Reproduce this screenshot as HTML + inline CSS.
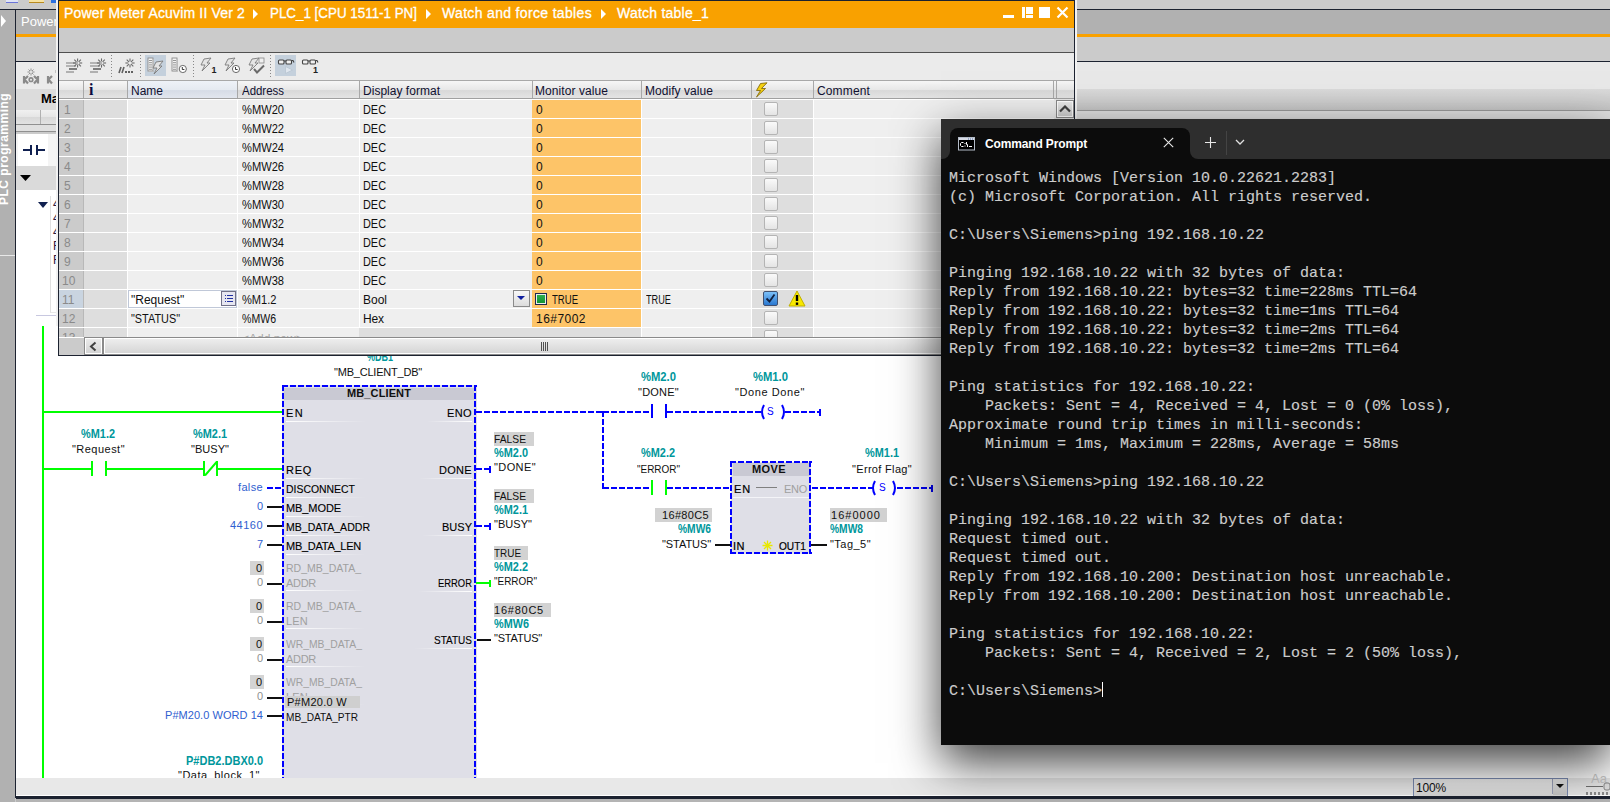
<!DOCTYPE html>
<html><head><meta charset="utf-8">
<style>
*{margin:0;padding:0;box-sizing:border-box}
html,body{width:1610px;height:802px;overflow:hidden;background:#cbcbcb;font-family:"Liberation Sans",sans-serif;position:relative}
.a{position:absolute}
.t{position:absolute;white-space:pre;line-height:1}
</style></head><body>
<div class="a" style="left:0px;top:0px;width:1610px;height:802px;background:#cbcbcb;"></div>
<div class="a" style="left:0px;top:10px;width:15px;height:792px;background:#b1b1b1;"></div>
<div class="a" style="left:0px;top:9px;width:1610px;height:1px;background:#1c2230;"></div>
<div class="a" style="left:15px;top:10px;width:1px;height:788px;background:#1c2230;"></div>
<div class="a" style="left:6px;top:0px;width:12px;height:3px;background:#dfe3f5;border-bottom:1px solid #6a74d8"></div>
<div class="a" style="left:29px;top:0px;width:15px;height:3px;background:#f6e2a0;border-bottom:1px solid #b88a20"></div>
<div class="a" style="left:51px;top:0px;width:5px;height:3px;background:#2a6fe0;"></div>
<svg class="a" style="left:0;top:14px" width="8" height="14"><path d="M1 1 L6 7 L1 13 Z" fill="#fff"/></svg>
<div class="t" style="left:-2px;top:205px;font-size:12px;color:#fff;font-weight:700;transform:rotate(-90deg);transform-origin:0 0;letter-spacing:0.5px">PLC programming</div>
<div class="a" style="left:0px;top:255px;width:15px;height:1px;background:#e8e8e8;"></div>
<div class="a" style="left:16px;top:10px;width:40px;height:24px;background:#b1b1b1;"></div>
<div class="t" style="left:21px;top:15px;font-size:13px;color:#fff;font-weight:400;font-family:'Liberation Sans',sans-serif;">Power</div>
<div class="a" style="left:16px;top:34px;width:40px;height:3px;background:#f9a100;"></div>
<div class="a" style="left:16px;top:37px;width:40px;height:24px;background:#cbcbcb;"></div>
<div class="a" style="left:16px;top:61px;width:40px;height:1px;background:#1c2230;"></div>
<div class="a" style="left:16px;top:62px;width:40px;height:27px;background:#ebebeb;"></div>
<svg class="a" style="left:16px;top:62px" width="42" height="27"><g transform="translate(-16,-62)"><path d="M24 76v7.5M24.5 79.5l3.5-3.5M24.5 79.5l3.5 4M38 76v7.5M37.5 79.5l-3.5-3.5M37.5 79.5l-3.5 4" stroke="#8a8a8a" stroke-width="2.2" fill="none"/><circle cx="31" cy="79.7" r="1.8" fill="none" stroke="#8a8a8a" stroke-width="1.6"/><path d="M31 68.5v2.5M31 73v2.5M27.5 72h2.5M32 72h2.5M28.5 69.5l1.6 1.6M33.5 69.5l-1.6 1.6M28.5 74.5l1.6-1.6M33.5 74.5l-1.6-1.6" stroke="#888" stroke-width="0.9"/><path d="M48 76v7.5M48.5 79.5l3.5-3.5M48.5 79.5l3.5 4" stroke="#8a8a8a" stroke-width="2.2" fill="none"/><path d="M56 70v3" stroke="#999" stroke-width="1"/></g></svg>
<div class="a" style="left:16px;top:89px;width:40px;height:21px;background:#dcdcdc;"></div>
<div class="t" style="left:41px;top:92px;font-size:13px;color:#000;font-weight:700;font-family:'Liberation Sans',sans-serif;">Ma</div>
<div class="a" style="left:16px;top:110px;width:40px;height:15px;background:#e4e4e4;border-bottom:1px solid #909090;background:linear-gradient(#f0f0f0,#e6e6e6 50%,#d8d8d8 51%,#e2e2e2)"></div>
<div class="a" style="left:40px;top:110px;width:1px;height:14px;background:#b0b0b0;"></div>
<div class="a" style="left:16px;top:125px;width:40px;height:7px;background:#e0e0e0;border-bottom:1px solid #909090"></div>
<div class="a" style="left:16px;top:134px;width:40px;height:32px;background:#f4f4f4;"></div>
<div class="a" style="left:18px;top:134px;width:30px;height:32px;background:#fff;"></div>
<svg class="a" style="left:22px;top:143px" width="24" height="14"><path d="M1 7H9M9 2V12M15 2V12M15 7H23" stroke="#102050" stroke-width="2" fill="none"/></svg>
<div class="a" style="left:16px;top:166px;width:40px;height:24px;background:#dadada;"></div>
<svg class="a" style="left:20px;top:175px" width="12" height="7"><path d="M0 0H11L5.5 6Z" fill="#000"/></svg>
<div class="a" style="left:16px;top:190px;width:40px;height:136px;background:#fff;"></div>
<svg class="a" style="left:38px;top:202px" width="11" height="7"><path d="M0 0H10L5 6Z" fill="#102050"/></svg>
<div class="a" style="left:50px;top:196px;width:6px;height:117px;background:#ffffff;border-left:1px solid #e0e0e0;border-bottom:1px solid #e8e8e8"></div>
<div class="t" style="left:53px;top:198px;font-size:12px;color:#302040;font-weight:400;font-family:'Liberation Sans',sans-serif;">4</div>
<div class="t" style="left:53px;top:212px;font-size:12px;color:#302040;font-weight:400;font-family:'Liberation Sans',sans-serif;">4</div>
<div class="t" style="left:53px;top:226px;font-size:12px;color:#302040;font-weight:400;font-family:'Liberation Sans',sans-serif;">4</div>
<div class="t" style="left:53px;top:240px;font-size:12px;color:#302040;font-weight:400;font-family:'Liberation Sans',sans-serif;">F</div>
<div class="t" style="left:53px;top:254px;font-size:12px;color:#302040;font-weight:400;font-family:'Liberation Sans',sans-serif;">F</div>
<div class="a" style="left:36px;top:315px;width:20px;height:1px;background:#c8c8e0;"></div>
<div class="a" style="left:56px;top:0px;width:2px;height:356px;background:#f2f2f2;"></div>
<div class="a" style="left:1077px;top:10px;width:533px;height:24px;background:#b1b1b1;"></div>
<div class="a" style="left:1077px;top:34px;width:533px;height:3px;background:#f9a100;"></div>
<div class="a" style="left:1077px;top:37px;width:533px;height:24px;background:#cbcbcb;"></div>
<div class="a" style="left:1077px;top:61px;width:533px;height:1px;background:#1c2230;"></div>
<div class="a" style="left:1077px;top:62px;width:533px;height:27px;background:#e8e8e8;"></div>
<div class="a" style="left:1077px;top:89px;width:533px;height:21px;background:#d0d0d0;background:linear-gradient(#dadada,#c6c6c6)"></div>
<div class="a" style="left:1077px;top:110px;width:533px;height:1px;background:#9a9a9a;"></div>
<div class="a" style="left:1075px;top:111px;width:535px;height:8px;background:#e2e2e2;"></div>
<div class="a" style="left:1075px;top:0px;width:2px;height:356px;background:#f2f2f2;"></div>
<div class="a" style="left:16px;top:326px;width:1594px;height:452px;background:#ffffff;"></div>
<div class="a" style="left:42px;top:326px;width:2px;height:452px;background:#00ff00;"></div>
<div class="a" style="left:44px;top:411px;width:238px;height:2px;background:#00ff00;"></div>
<div class="a" style="left:44px;top:468px;width:47px;height:2px;background:#00ff00;"></div>
<div class="a" style="left:91px;top:461px;width:2px;height:15px;background:#00ff00;"></div>
<div class="a" style="left:105px;top:461px;width:2px;height:15px;background:#00ff00;"></div>
<div class="a" style="left:107px;top:468px;width:96px;height:2px;background:#00ff00;"></div>
<div class="a" style="left:203px;top:461px;width:2px;height:15px;background:#00ff00;"></div>
<div class="a" style="left:216px;top:461px;width:2px;height:15px;background:#00ff00;"></div>
<svg class="a" style="left:203px;top:461px" width="16" height="15"><path d="M2 14.5L14 0.5" stroke="#00ff00" stroke-width="2"/></svg>
<div class="a" style="left:218px;top:468px;width:64px;height:2px;background:#00ff00;"></div>
<div class="t" style="left:81px;top:428px;font-size:12px;color:#00979c;font-weight:700;font-family:'Liberation Sans',sans-serif;transform:scaleX(0.9101);transform-origin:0 0;">%M1.2</div>
<div class="t" style="left:72px;top:444px;font-size:11px;color:#101010;font-weight:400;font-family:'Liberation Sans',sans-serif;letter-spacing:0.469px;">&quot;Request&quot;</div>
<div class="t" style="left:193px;top:428px;font-size:12px;color:#00979c;font-weight:700;font-family:'Liberation Sans',sans-serif;transform:scaleX(0.9101);transform-origin:0 0;">%M2.1</div>
<div class="t" style="left:191px;top:444px;font-size:11px;color:#101010;font-weight:400;font-family:'Liberation Sans',sans-serif;letter-spacing:0.039px;">&quot;BUSY&quot;</div>
<div class="a" style="left:282px;top:385px;width:195px;height:393px;background:#dfdfe7"></div>
<div class="a" style="left:284px;top:388px;width:190px;height:12px;background:#c9c9d3;"></div>
<div class="a" style="left:282px;top:385px;width:195px;height:2px;background:repeating-linear-gradient(90deg,#0000ff 0px,#0000ff 6px,transparent 6px,transparent 8px)"></div>
<div class="a" style="left:282px;top:385px;width:2px;height:393px;background:repeating-linear-gradient(180deg,#0000ff 0px,#0000ff 6px,transparent 6px,transparent 8px)"></div>
<div class="a" style="left:474px;top:385px;width:2px;height:393px;background:repeating-linear-gradient(180deg,#0000ff 0px,#0000ff 6px,transparent 6px,transparent 8px)"></div>
<div class="t" style="left:367px;top:351px;font-size:12px;color:#00979c;font-weight:700;font-family:'Liberation Sans',sans-serif;transform:scaleX(0.7495);transform-origin:0 0;">%DB1</div>
<div class="t" style="left:334px;top:367px;font-size:11px;color:#101010;font-weight:400;font-family:'Liberation Sans',sans-serif;letter-spacing:-0.211px;">&quot;MB_CLIENT_DB&quot;</div>
<div class="t" style="left:347px;top:388px;font-size:11px;color:#101010;font-weight:700;font-family:'Liberation Sans',sans-serif;letter-spacing:0.116px;">MB_CLIENT</div>
<div class="t" style="left:286px;top:408px;font-size:11px;color:#000;font-weight:400;font-family:'Liberation Sans',sans-serif;letter-spacing:1.359px;-webkit-text-stroke:0.12px #000">EN</div>
<div class="a" style="left:286px;top:421px;width:80px;height:1px;background:linear-gradient(90deg,#fff,rgba(255,255,255,0))"></div>
<div class="t" style="left:286px;top:465px;font-size:11px;color:#000;font-weight:400;font-family:'Liberation Sans',sans-serif;letter-spacing:0.719px;-webkit-text-stroke:0.12px #000">REQ</div>
<div class="a" style="left:286px;top:478px;width:80px;height:1px;background:linear-gradient(90deg,#fff,rgba(255,255,255,0))"></div>
<div class="t" style="left:286px;top:484px;font-size:11px;color:#000;font-weight:400;font-family:'Liberation Sans',sans-serif;transform:scaleX(0.9487);transform-origin:0 0;-webkit-text-stroke:0.12px #000">DISCONNECT</div>
<div class="a" style="left:286px;top:497px;width:80px;height:1px;background:linear-gradient(90deg,#fff,rgba(255,255,255,0))"></div>
<div class="t" style="left:286px;top:503px;font-size:11px;color:#000;font-weight:400;font-family:'Liberation Sans',sans-serif;letter-spacing:-0.089px;-webkit-text-stroke:0.12px #000">MB_MODE</div>
<div class="a" style="left:286px;top:516px;width:80px;height:1px;background:linear-gradient(90deg,#fff,rgba(255,255,255,0))"></div>
<div class="t" style="left:286px;top:522px;font-size:11px;color:#000;font-weight:400;font-family:'Liberation Sans',sans-serif;transform:scaleX(0.9588);transform-origin:0 0;-webkit-text-stroke:0.12px #000">MB_DATA_ADDR</div>
<div class="a" style="left:286px;top:535px;width:80px;height:1px;background:linear-gradient(90deg,#fff,rgba(255,255,255,0))"></div>
<div class="t" style="left:286px;top:541px;font-size:11px;color:#000;font-weight:400;font-family:'Liberation Sans',sans-serif;letter-spacing:-0.259px;-webkit-text-stroke:0.12px #000">MB_DATA_LEN</div>
<div class="a" style="left:286px;top:554px;width:80px;height:1px;background:linear-gradient(90deg,#fff,rgba(255,255,255,0))"></div>
<div class="t" style="left:447px;top:408px;font-size:11px;color:#000;font-weight:400;font-family:'Liberation Sans',sans-serif;letter-spacing:0.385px;-webkit-text-stroke:0.12px #000">ENO</div>
<div class="a" style="left:427px;top:421px;width:45px;height:1px;background:linear-gradient(270deg,#fff,rgba(255,255,255,0))"></div>
<div class="t" style="left:439px;top:465px;font-size:11px;color:#000;font-weight:400;font-family:'Liberation Sans',sans-serif;letter-spacing:0.305px;-webkit-text-stroke:0.12px #000">DONE</div>
<div class="a" style="left:419px;top:478px;width:53px;height:1px;background:linear-gradient(270deg,#fff,rgba(255,255,255,0))"></div>
<div class="t" style="left:442px;top:522px;font-size:11px;color:#000;font-weight:400;font-family:'Liberation Sans',sans-serif;letter-spacing:0.008px;-webkit-text-stroke:0.12px #000">BUSY</div>
<div class="a" style="left:422px;top:535px;width:50px;height:1px;background:linear-gradient(270deg,#fff,rgba(255,255,255,0))"></div>
<div class="t" style="left:438px;top:578px;font-size:11px;color:#000;font-weight:400;font-family:'Liberation Sans',sans-serif;transform:scaleX(0.8557);transform-origin:0 0;-webkit-text-stroke:0.12px #000">ERROR</div>
<div class="a" style="left:418px;top:591px;width:54px;height:1px;background:linear-gradient(270deg,#fff,rgba(255,255,255,0))"></div>
<div class="t" style="left:434px;top:635px;font-size:11px;color:#000;font-weight:400;font-family:'Liberation Sans',sans-serif;transform:scaleX(0.9098);transform-origin:0 0;-webkit-text-stroke:0.12px #000">STATUS</div>
<div class="a" style="left:414px;top:648px;width:58px;height:1px;background:linear-gradient(270deg,#fff,rgba(255,255,255,0))"></div>
<div class="t" style="left:286px;top:563px;font-size:11px;color:#a0a0a0;font-weight:400;font-family:'Liberation Sans',sans-serif;transform:scaleX(0.9560);transform-origin:0 0;">RD_MB_DATA_</div>
<div class="t" style="left:286px;top:578px;font-size:11px;color:#a0a0a0;font-weight:400;font-family:'Liberation Sans',sans-serif;letter-spacing:-0.293px;">ADDR</div>
<div class="a" style="left:286px;top:590px;width:80px;height:1px;background:linear-gradient(90deg,#fff,rgba(255,255,255,0))"></div>
<div class="a" style="left:250px;top:561px;width:14px;height:14px;background:#d4d4d4;"></div>
<div class="t" style="left:256px;top:563px;font-size:11px;color:#101010;font-weight:400;font-family:'Liberation Sans',sans-serif;">0</div>
<div class="t" style="left:257px;top:577px;font-size:11px;color:#909090;font-weight:400;font-family:'Liberation Sans',sans-serif;">0</div>
<div class="a" style="left:267px;top:583px;width:15px;height:2px;background:#101010;"></div>
<div class="t" style="left:286px;top:601px;font-size:11px;color:#a0a0a0;font-weight:400;font-family:'Liberation Sans',sans-serif;transform:scaleX(0.9560);transform-origin:0 0;">RD_MB_DATA_</div>
<div class="t" style="left:286px;top:616px;font-size:11px;color:#a0a0a0;font-weight:400;font-family:'Liberation Sans',sans-serif;letter-spacing:0.198px;">LEN</div>
<div class="a" style="left:286px;top:628px;width:80px;height:1px;background:linear-gradient(90deg,#fff,rgba(255,255,255,0))"></div>
<div class="a" style="left:250px;top:599px;width:14px;height:14px;background:#d4d4d4;"></div>
<div class="t" style="left:256px;top:601px;font-size:11px;color:#101010;font-weight:400;font-family:'Liberation Sans',sans-serif;">0</div>
<div class="t" style="left:257px;top:615px;font-size:11px;color:#909090;font-weight:400;font-family:'Liberation Sans',sans-serif;">0</div>
<div class="a" style="left:267px;top:621px;width:15px;height:2px;background:#101010;"></div>
<div class="t" style="left:286px;top:639px;font-size:11px;color:#a0a0a0;font-weight:400;font-family:'Liberation Sans',sans-serif;transform:scaleX(0.9395);transform-origin:0 0;">WR_MB_DATA_</div>
<div class="t" style="left:286px;top:654px;font-size:11px;color:#a0a0a0;font-weight:400;font-family:'Liberation Sans',sans-serif;letter-spacing:-0.293px;">ADDR</div>
<div class="a" style="left:286px;top:666px;width:80px;height:1px;background:linear-gradient(90deg,#fff,rgba(255,255,255,0))"></div>
<div class="a" style="left:250px;top:637px;width:14px;height:14px;background:#d4d4d4;"></div>
<div class="t" style="left:256px;top:639px;font-size:11px;color:#101010;font-weight:400;font-family:'Liberation Sans',sans-serif;">0</div>
<div class="t" style="left:257px;top:653px;font-size:11px;color:#909090;font-weight:400;font-family:'Liberation Sans',sans-serif;">0</div>
<div class="a" style="left:267px;top:659px;width:15px;height:2px;background:#101010;"></div>
<div class="t" style="left:286px;top:677px;font-size:11px;color:#a0a0a0;font-weight:400;font-family:'Liberation Sans',sans-serif;transform:scaleX(0.9395);transform-origin:0 0;">WR_MB_DATA_</div>
<div class="t" style="left:286px;top:692px;font-size:11px;color:#a0a0a0;font-weight:400;font-family:'Liberation Sans',sans-serif;letter-spacing:0.198px;">LEN</div>
<div class="a" style="left:286px;top:704px;width:80px;height:1px;background:linear-gradient(90deg,#fff,rgba(255,255,255,0))"></div>
<div class="a" style="left:250px;top:675px;width:14px;height:14px;background:#d4d4d4;"></div>
<div class="t" style="left:256px;top:677px;font-size:11px;color:#101010;font-weight:400;font-family:'Liberation Sans',sans-serif;">0</div>
<div class="t" style="left:257px;top:691px;font-size:11px;color:#909090;font-weight:400;font-family:'Liberation Sans',sans-serif;">0</div>
<div class="a" style="left:267px;top:697px;width:15px;height:2px;background:#101010;"></div>
<div class="a" style="left:285px;top:696px;width:75px;height:12px;background:#cfcfcf;"></div>
<div class="t" style="left:287px;top:697px;font-size:11px;color:#101010;font-weight:400;font-family:'Liberation Sans',sans-serif;letter-spacing:0.281px;">P#M20.0 W</div>
<div class="t" style="left:286px;top:712px;font-size:11px;color:#101010;font-weight:400;font-family:'Liberation Sans',sans-serif;transform:scaleX(0.9177);transform-origin:0 0;">MB_DATA_PTR</div>
<div class="t" style="left:165px;top:710px;font-size:11px;color:#3060d0;font-weight:400;font-family:'Liberation Sans',sans-serif;letter-spacing:0.053px;">P#M20.0 WORD 14</div>
<div class="a" style="left:267px;top:715px;width:15px;height:2px;background:#101010;"></div>
<div class="t" style="left:186px;top:755px;font-size:12px;color:#00979c;font-weight:700;font-family:'Liberation Sans',sans-serif;transform:scaleX(0.9162);transform-origin:0 0;">P#DB2.DBX0.0</div>
<div class="t" style="left:178px;top:770px;font-size:11px;color:#101010;font-weight:400;font-family:'Liberation Sans',sans-serif;letter-spacing:0.494px;">&quot;Data_block_1&quot;</div>
<div class="t" style="left:238px;top:482px;font-size:11px;color:#3060d0;font-weight:400;font-family:'Liberation Sans',sans-serif;letter-spacing:0.350px;">false</div>
<div class="a" style="left:267px;top:487px;width:15px;height:2px;background:repeating-linear-gradient(90deg,#0000ff 0px,#0000ff 6px,transparent 6px,transparent 8px)"></div>
<div class="t" style="left:257px;top:501px;font-size:11px;color:#3060d0;font-weight:400;font-family:'Liberation Sans',sans-serif;">0</div>
<div class="a" style="left:267px;top:506px;width:15px;height:2px;background:#101010;"></div>
<div class="t" style="left:230px;top:520px;font-size:11px;color:#3060d0;font-weight:400;font-family:'Liberation Sans',sans-serif;letter-spacing:0.481px;">44160</div>
<div class="a" style="left:267px;top:525px;width:15px;height:2px;background:#101010;"></div>
<div class="t" style="left:257px;top:539px;font-size:11px;color:#3060d0;font-weight:400;font-family:'Liberation Sans',sans-serif;">7</div>
<div class="a" style="left:267px;top:544px;width:15px;height:2px;background:#101010;"></div>
<div class="a" style="left:476px;top:411px;width:127px;height:2px;background:repeating-linear-gradient(90deg,#0000ff 0px,#0000ff 6px,transparent 6px,transparent 8px)"></div>
<div class="a" style="left:476px;top:468px;width:14px;height:2px;background:repeating-linear-gradient(90deg,#0000ff 0px,#0000ff 6px,transparent 6px,transparent 8px)"></div>
<div class="a" style="left:489px;top:466px;width:2px;height:7px;background:#0000ff;"></div>
<div class="a" style="left:476px;top:525px;width:14px;height:2px;background:repeating-linear-gradient(90deg,#0000ff 0px,#0000ff 6px,transparent 6px,transparent 8px)"></div>
<div class="a" style="left:489px;top:523px;width:2px;height:7px;background:#0000ff;"></div>
<div class="a" style="left:476px;top:582px;width:15px;height:2px;background:#00ff00;"></div>
<div class="a" style="left:489px;top:580px;width:2px;height:7px;background:#00ff00;"></div>
<div class="a" style="left:477px;top:639px;width:14px;height:2px;background:#101010;"></div>
<div class="a" style="left:494px;top:432px;width:40px;height:14px;background:#d2d2d2;"></div>
<div class="t" style="left:494px;top:434px;font-size:11px;color:#101010;font-weight:400;font-family:'Liberation Sans',sans-serif;transform:scaleX(0.9343);transform-origin:0 0;">FALSE</div>
<div class="t" style="left:494px;top:447px;font-size:12px;color:#00979c;font-weight:700;font-family:'Liberation Sans',sans-serif;transform:scaleX(0.9101);transform-origin:0 0;">%M2.0</div>
<div class="t" style="left:494px;top:462px;font-size:11px;color:#101010;font-weight:400;font-family:'Liberation Sans',sans-serif;letter-spacing:0.401px;">&quot;DONE&quot;</div>
<div class="a" style="left:494px;top:489px;width:40px;height:14px;background:#d2d2d2;"></div>
<div class="t" style="left:494px;top:491px;font-size:11px;color:#101010;font-weight:400;font-family:'Liberation Sans',sans-serif;transform:scaleX(0.9343);transform-origin:0 0;">FALSE</div>
<div class="t" style="left:494px;top:504px;font-size:12px;color:#00979c;font-weight:700;font-family:'Liberation Sans',sans-serif;transform:scaleX(0.9101);transform-origin:0 0;">%M2.1</div>
<div class="t" style="left:494px;top:519px;font-size:11px;color:#101010;font-weight:400;font-family:'Liberation Sans',sans-serif;letter-spacing:0.039px;">&quot;BUSY&quot;</div>
<div class="a" style="left:494px;top:546px;width:34px;height:14px;background:#d2d2d2;"></div>
<div class="t" style="left:494px;top:548px;font-size:11px;color:#101010;font-weight:400;font-family:'Liberation Sans',sans-serif;transform:scaleX(0.9014);transform-origin:0 0;">TRUE</div>
<div class="t" style="left:494px;top:561px;font-size:12px;color:#00979c;font-weight:700;font-family:'Liberation Sans',sans-serif;transform:scaleX(0.9101);transform-origin:0 0;">%M2.2</div>
<div class="t" style="left:494px;top:576px;font-size:11px;color:#101010;font-weight:400;font-family:'Liberation Sans',sans-serif;transform:scaleX(0.9044);transform-origin:0 0;">&quot;ERROR&quot;</div>
<div class="a" style="left:494px;top:603px;width:57px;height:14px;background:#d2d2d2;"></div>
<div class="t" style="left:494px;top:605px;font-size:11px;color:#101010;font-weight:400;font-family:'Liberation Sans',sans-serif;letter-spacing:0.763px;">16#80C5</div>
<div class="t" style="left:494px;top:618px;font-size:12px;color:#00979c;font-weight:700;font-family:'Liberation Sans',sans-serif;transform:scaleX(0.9051);transform-origin:0 0;">%MW6</div>
<div class="t" style="left:494px;top:633px;font-size:11px;color:#101010;font-weight:400;font-family:'Liberation Sans',sans-serif;letter-spacing:-0.197px;">&quot;STATUS&quot;</div>
<div class="a" style="left:602px;top:411px;width:2px;height:78px;background:repeating-linear-gradient(180deg,#0000ff 0px,#0000ff 6px,transparent 6px,transparent 8px)"></div>
<div class="a" style="left:603px;top:411px;width:49px;height:2px;background:repeating-linear-gradient(90deg,#0000ff 0px,#0000ff 6px,transparent 6px,transparent 8px)"></div>
<div class="a" style="left:651px;top:404px;width:2px;height:14px;background:#0000ff;"></div>
<div class="a" style="left:665px;top:404px;width:2px;height:14px;background:#0000ff;"></div>
<div class="a" style="left:667px;top:411px;width:94px;height:2px;background:repeating-linear-gradient(90deg,#0000ff 0px,#0000ff 6px,transparent 6px,transparent 8px)"></div>
<svg class="a" style="left:759px;top:404px" width="28" height="16"><path d="M5 1Q1 8 5 15M23 1Q27 8 23 15" stroke="#0000ff" stroke-width="2" fill="none"/></svg>
<div class="t" style="left:767px;top:407px;font-size:10px;color:#0000ff;font-weight:400;font-family:'Liberation Sans',sans-serif;letter-spacing:0.328px;">S</div>
<div class="a" style="left:785px;top:411px;width:36px;height:2px;background:repeating-linear-gradient(90deg,#0000ff 0px,#0000ff 6px,transparent 6px,transparent 8px)"></div>
<div class="a" style="left:819px;top:409px;width:2px;height:7px;background:#0000ff;"></div>
<div class="t" style="left:641px;top:371px;font-size:12px;color:#00979c;font-weight:700;font-family:'Liberation Sans',sans-serif;transform:scaleX(0.9368);transform-origin:0 0;">%M2.0</div>
<div class="t" style="left:638px;top:387px;font-size:11px;color:#101010;font-weight:400;font-family:'Liberation Sans',sans-serif;letter-spacing:0.234px;">&quot;DONE&quot;</div>
<div class="t" style="left:753px;top:371px;font-size:12px;color:#00979c;font-weight:700;font-family:'Liberation Sans',sans-serif;transform:scaleX(0.9368);transform-origin:0 0;">%M1.0</div>
<div class="t" style="left:735px;top:387px;font-size:11px;color:#101010;font-weight:400;font-family:'Liberation Sans',sans-serif;letter-spacing:0.594px;">&quot;Done Done&quot;</div>
<div class="a" style="left:603px;top:487px;width:49px;height:2px;background:repeating-linear-gradient(90deg,#0000ff 0px,#0000ff 6px,transparent 6px,transparent 8px)"></div>
<div class="a" style="left:651px;top:480px;width:2px;height:15px;background:#00ff00;"></div>
<div class="a" style="left:665px;top:480px;width:2px;height:15px;background:#00ff00;"></div>
<div class="a" style="left:667px;top:487px;width:64px;height:2px;background:repeating-linear-gradient(90deg,#0000ff 0px,#0000ff 6px,transparent 6px,transparent 8px)"></div>
<div class="t" style="left:641px;top:447px;font-size:12px;color:#00979c;font-weight:700;font-family:'Liberation Sans',sans-serif;transform:scaleX(0.9101);transform-origin:0 0;">%M2.2</div>
<div class="t" style="left:637px;top:464px;font-size:11px;color:#101010;font-weight:400;font-family:'Liberation Sans',sans-serif;transform:scaleX(0.9044);transform-origin:0 0;">&quot;ERROR&quot;</div>
<div class="a" style="left:731px;top:462px;width:80px;height:92px;background:#dfdfe7;"></div>
<div class="a" style="left:733px;top:463px;width:77px;height:13px;background:#c9c9d3;"></div>
<div class="a" style="left:730px;top:461px;width:82px;height:2px;background:repeating-linear-gradient(90deg,#0000ff 0px,#0000ff 6px,transparent 6px,transparent 8px)"></div>
<div class="a" style="left:730px;top:552px;width:82px;height:2px;background:repeating-linear-gradient(90deg,#0000ff 0px,#0000ff 6px,transparent 6px,transparent 8px)"></div>
<div class="a" style="left:730px;top:461px;width:2px;height:93px;background:repeating-linear-gradient(180deg,#0000ff 0px,#0000ff 6px,transparent 6px,transparent 8px)"></div>
<div class="a" style="left:809px;top:461px;width:2px;height:93px;background:repeating-linear-gradient(180deg,#0000ff 0px,#0000ff 6px,transparent 6px,transparent 8px)"></div>
<div class="t" style="left:752px;top:464px;font-size:11px;color:#101010;font-weight:700;font-family:'Liberation Sans',sans-serif;letter-spacing:0.398px;">MOVE</div>
<div class="t" style="left:734px;top:484px;font-size:11px;color:#000;font-weight:400;font-family:'Liberation Sans',sans-serif;letter-spacing:0.859px;-webkit-text-stroke:0.2px #000">EN</div>
<div class="a" style="left:756px;top:487px;width:21px;height:1px;background:#808080;"></div>
<div class="t" style="left:784px;top:484px;font-size:11px;color:#a0a0a0;font-weight:400;font-family:'Liberation Sans',sans-serif;letter-spacing:-0.281px;">ENO</div>
<div class="a" style="left:733px;top:497px;width:76px;height:1px;background:#f4f4f8"></div>
<div class="t" style="left:733px;top:541px;font-size:11px;color:#000;font-weight:400;font-family:'Liberation Sans',sans-serif;letter-spacing:0.500px;-webkit-text-stroke:0.2px #000">IN</div>
<div class="t" style="left:779px;top:541px;font-size:11px;color:#000;font-weight:400;font-family:'Liberation Sans',sans-serif;transform:scaleX(0.9201);transform-origin:0 0;-webkit-text-stroke:0.2px #000">OUT1</div>
<svg class="a" style="left:762px;top:540px" width="11" height="11"><path d="M5.5 0.5v10M0.5 5.5h10M2 2l7 7M9 2l-7 7" stroke="#e8e800" stroke-width="1.3"/></svg>
<div class="a" style="left:655px;top:508px;width:57px;height:14px;background:#d2d2d2;"></div>
<div class="t" style="left:662px;top:510px;font-size:11px;color:#101010;font-weight:400;font-family:'Liberation Sans',sans-serif;letter-spacing:0.335px;">16#80C5</div>
<div class="t" style="left:678px;top:523px;font-size:12px;color:#00979c;font-weight:700;font-family:'Liberation Sans',sans-serif;transform:scaleX(0.8533);transform-origin:0 0;">%MW6</div>
<div class="t" style="left:662px;top:539px;font-size:11px;color:#101010;font-weight:400;font-family:'Liberation Sans',sans-serif;letter-spacing:-0.072px;">&quot;STATUS&quot;</div>
<div class="a" style="left:715px;top:544px;width:16px;height:2px;background:#101010;"></div>
<div class="a" style="left:812px;top:487px;width:61px;height:2px;background:repeating-linear-gradient(90deg,#0000ff 0px,#0000ff 6px,transparent 6px,transparent 8px)"></div>
<svg class="a" style="left:870px;top:480px" width="28" height="16"><path d="M5 1Q1 8 5 15M23 1Q27 8 23 15" stroke="#0000ff" stroke-width="2" fill="none"/></svg>
<div class="t" style="left:879px;top:483px;font-size:10px;color:#0000ff;font-weight:400;font-family:'Liberation Sans',sans-serif;letter-spacing:0.328px;">S</div>
<div class="a" style="left:897px;top:487px;width:36px;height:2px;background:repeating-linear-gradient(90deg,#0000ff 0px,#0000ff 6px,transparent 6px,transparent 8px)"></div>
<div class="a" style="left:931px;top:485px;width:2px;height:7px;background:#0000ff;"></div>
<div class="t" style="left:865px;top:447px;font-size:12px;color:#00979c;font-weight:700;font-family:'Liberation Sans',sans-serif;transform:scaleX(0.9101);transform-origin:0 0;">%M1.1</div>
<div class="t" style="left:852px;top:464px;font-size:11px;color:#101010;font-weight:400;font-family:'Liberation Sans',sans-serif;letter-spacing:0.324px;">&quot;Errof Flag&quot;</div>
<div class="a" style="left:830px;top:508px;width:57px;height:14px;background:#d2d2d2;"></div>
<div class="t" style="left:831px;top:510px;font-size:11px;color:#101010;font-weight:400;font-family:'Liberation Sans',sans-serif;letter-spacing:1.025px;">16#0000</div>
<div class="t" style="left:830px;top:523px;font-size:12px;color:#00979c;font-weight:700;font-family:'Liberation Sans',sans-serif;transform:scaleX(0.8533);transform-origin:0 0;">%MW8</div>
<div class="t" style="left:830px;top:539px;font-size:11px;color:#101010;font-weight:400;font-family:'Liberation Sans',sans-serif;letter-spacing:0.460px;">&quot;Tag_5&quot;</div>
<div class="a" style="left:811px;top:544px;width:16px;height:2px;background:#101010;"></div>
<div class="a" style="left:16px;top:778px;width:1594px;height:17px;background:#e8e8e8;"></div>
<div class="a" style="left:16px;top:795px;width:1594px;height:1px;background:#ffffff;"></div>
<div class="a" style="left:16px;top:796px;width:1594px;height:3px;background:#1c2230;"></div>
<div class="a" style="left:16px;top:799px;width:1594px;height:3px;background:#b4b4b4;"></div>
<div class="a" style="left:1413px;top:778px;width:155px;height:18px;background:#e6e6e6;border:1px solid #7a8ab0;border-bottom:none;background:linear-gradient(#f0f0f0,#d8d8d8)"></div>
<div class="t" style="left:1416px;top:782px;font-size:12px;color:#101010;font-weight:400;font-family:'Liberation Sans',sans-serif;letter-spacing:-0.176px;">100%</div>
<div class="a" style="left:1552px;top:779px;width:1px;height:15px;background:#9aa0b8;"></div>
<div class="a" style="left:1553px;top:779px;width:14px;height:16px;background:#d0d0d0;background:linear-gradient(#ececec,#c4c4c4)"></div>
<svg class="a" style="left:1556px;top:784px" width="9" height="5"><path d="M0 0h8L4 4z" fill="#101010"/></svg>
<svg class="a" style="left:1585px;top:770px" width="25" height="26"><text x="6" y="13" font-size="13" fill="#c8c8c8" font-family="Liberation Sans">Aa</text><path d="M1 16.5h17" stroke="#707070"/><path d="M2 22v3M6 22v3M10 22v3M14 22v3M18 22v3M22 22v3" stroke="#303030"/><rect x="19" y="13" width="6" height="7" rx="2" fill="#e0e0e0" stroke="#888"/></svg>
<div class="a" style="left:58px;top:0px;width:1017px;height:356px;background:#1c2230;"></div>
<div class="a" style="left:59px;top:1px;width:1015px;height:27px;background:#f9a100;"></div>
<div class="t" style="left:64px;top:6px;font-size:14px;color:#fff;font-weight:400;font-family:'Liberation Sans',sans-serif;letter-spacing:0.162px;-webkit-text-stroke:0.3px #fff">Power Meter Acuvim II Ver 2</div>
<div class="t" style="left:270px;top:6px;font-size:14px;color:#fff;font-weight:400;font-family:'Liberation Sans',sans-serif;transform:scaleX(0.9556);transform-origin:0 0;-webkit-text-stroke:0.3px #fff">PLC_1 [CPU 1511-1 PN]</div>
<div class="t" style="left:442px;top:6px;font-size:14px;color:#fff;font-weight:400;font-family:'Liberation Sans',sans-serif;letter-spacing:0.333px;-webkit-text-stroke:0.3px #fff">Watch and force tables</div>
<div class="t" style="left:617px;top:6px;font-size:14px;color:#fff;font-weight:400;font-family:'Liberation Sans',sans-serif;letter-spacing:0.232px;-webkit-text-stroke:0.3px #fff">Watch table_1</div>
<svg class="a" style="left:253px;top:9px" width="6" height="10"><path d="M0 0L5 5L0 10Z" fill="#fff"/></svg>
<svg class="a" style="left:426px;top:9px" width="6" height="10"><path d="M0 0L5 5L0 10Z" fill="#fff"/></svg>
<svg class="a" style="left:601px;top:9px" width="6" height="10"><path d="M0 0L5 5L0 10Z" fill="#fff"/></svg>
<div class="a" style="left:1003px;top:15px;width:11px;height:3px;background:#fff;"></div>
<div class="a" style="left:1022px;top:7px;width:3px;height:11px;background:#fff;"></div>
<div class="a" style="left:1026px;top:7px;width:7px;height:7px;background:#fff;"></div>
<div class="a" style="left:1026px;top:15px;width:7px;height:3px;background:#fff;"></div>
<div class="a" style="left:1039px;top:7px;width:11px;height:11px;background:#fff;"></div>
<svg class="a" style="left:1056px;top:6px" width="13" height="13"><path d="M1.5 1.5L11.5 11.5M11.5 1.5L1.5 11.5" stroke="#fff" stroke-width="2.2"/></svg>
<div class="a" style="left:59px;top:28px;width:1015px;height:24px;background:#cbcbcb;"></div>
<div class="a" style="left:59px;top:52px;width:1015px;height:1px;background:#505050;"></div>
<div class="a" style="left:59px;top:53px;width:1015px;height:27px;background:#ebebeb;"></div>
<svg class="a" style="left:58px;top:53px" width="270" height="27"><g transform="translate(-58,-53)"><rect x="66" y="62" width="12" height="2" fill="#b4b4b4"/><rect x="66" y="65" width="10" height="2" fill="#b4b4b4"/><rect x="69" y="68" width="8" height="2" fill="#7c7c7c"/><rect x="66" y="71" width="8" height="2" fill="#b0b0b0"/><path d="M79.2 63.0L82.2 63.0" stroke="#6a6a6a" stroke-width="1.1"/><path d="M78.7 64.1L80.9 66.3" stroke="#6a6a6a" stroke-width="1.1"/><path d="M77.6 64.6L77.6 67.6" stroke="#6a6a6a" stroke-width="1.1"/><path d="M76.5 64.1L74.3 66.3" stroke="#6a6a6a" stroke-width="1.1"/><path d="M76.0 63.0L73.0 63.0" stroke="#6a6a6a" stroke-width="1.1"/><path d="M76.5 61.9L74.3 59.7" stroke="#6a6a6a" stroke-width="1.1"/><path d="M77.6 61.4L77.6 58.4" stroke="#6a6a6a" stroke-width="1.1"/><path d="M78.7 61.9L80.9 59.7" stroke="#6a6a6a" stroke-width="1.1"/><rect x="90" y="62" width="12" height="2" fill="#b4b4b4"/><rect x="90" y="65" width="10" height="2" fill="#b4b4b4"/><rect x="93" y="68" width="8" height="2" fill="#7c7c7c"/><rect x="90" y="71" width="8" height="2" fill="#b0b0b0"/><path d="M103.1 63.0L106.1 63.0" stroke="#6a6a6a" stroke-width="1.1"/><path d="M102.6 64.1L104.8 66.3" stroke="#6a6a6a" stroke-width="1.1"/><path d="M101.5 64.6L101.5 67.6" stroke="#6a6a6a" stroke-width="1.1"/><path d="M100.4 64.1L98.2 66.3" stroke="#6a6a6a" stroke-width="1.1"/><path d="M99.9 63.0L96.9 63.0" stroke="#6a6a6a" stroke-width="1.1"/><path d="M100.4 61.9L98.2 59.7" stroke="#6a6a6a" stroke-width="1.1"/><path d="M101.5 61.4L101.5 58.4" stroke="#6a6a6a" stroke-width="1.1"/><path d="M102.6 61.9L104.8 59.7" stroke="#6a6a6a" stroke-width="1.1"/><path d="M111.5 55v23" stroke="#888" stroke-dasharray="1 2"/><path d="M121 67l-2 6M124 67l-2 6" stroke="#606060" stroke-width="1.6"/><path d="M125 72h2M128 72h2M131 72h2" stroke="#606060" stroke-width="2"/><path d="M131.6 63.0L134.6 63.0" stroke="#6a6a6a" stroke-width="1.1"/><path d="M131.1 64.1L133.3 66.3" stroke="#6a6a6a" stroke-width="1.1"/><path d="M130.0 64.6L130.0 67.6" stroke="#6a6a6a" stroke-width="1.1"/><path d="M128.9 64.1L126.7 66.3" stroke="#6a6a6a" stroke-width="1.1"/><path d="M128.4 63.0L125.4 63.0" stroke="#6a6a6a" stroke-width="1.1"/><path d="M128.9 61.9L126.7 59.7" stroke="#6a6a6a" stroke-width="1.1"/><path d="M130.0 61.4L130.0 58.4" stroke="#6a6a6a" stroke-width="1.1"/><path d="M131.1 61.9L133.3 59.7" stroke="#6a6a6a" stroke-width="1.1"/><path d="M140.5 55v23" stroke="#888" stroke-dasharray="1 2"/><rect x="145" y="55" width="21" height="21" fill="#c4d0dc"/><rect x="148" y="58" width="5" height="13" fill="#f4f4f4" stroke="#8a8a8a" stroke-width="0.9"/><path d="M153.5 59v12.5h-5" stroke="#bbb" fill="none"/><path d="M149 60.5h3" stroke="#8a8a8a" stroke-width="0.9"/><path d="M149 62.7h3" stroke="#8a8a8a" stroke-width="0.9"/><path d="M149 64.9h3" stroke="#8a8a8a" stroke-width="0.9"/><path d="M149 67.1h3" stroke="#8a8a8a" stroke-width="0.9"/><path d="M149 69.3h3" stroke="#8a8a8a" stroke-width="0.9"/><path d="M163 61L156 62L153 68L157 68L154 74L162 66L159 66Z" fill="#e4e4e4" stroke="#7a7a7a" stroke-width="0.9"/><rect x="172" y="58" width="5" height="13" fill="#f4f4f4" stroke="#8a8a8a" stroke-width="0.9"/><path d="M177.5 59v12.5h-5" stroke="#bbb" fill="none"/><path d="M173 60.5h3" stroke="#8a8a8a" stroke-width="0.9"/><path d="M173 62.7h3" stroke="#8a8a8a" stroke-width="0.9"/><path d="M173 64.9h3" stroke="#8a8a8a" stroke-width="0.9"/><path d="M173 67.1h3" stroke="#8a8a8a" stroke-width="0.9"/><path d="M173 69.3h3" stroke="#8a8a8a" stroke-width="0.9"/><circle cx="182.8" cy="69" r="3.6" fill="#fff" stroke="#6a6a6a" stroke-width="1"/><path d="M182.3 67V69.5H184.4" stroke="#222" stroke-width="0.9" fill="none"/><path d="M193.5 55v23" stroke="#888" stroke-dasharray="1 2"/><path d="M211 58L204 59L201 65L205 65L202 71L210 63L207 63Z" fill="#e4e4e4" stroke="#7a7a7a" stroke-width="0.9"/><text x="211.5" y="73" font-size="9" font-weight="700" fill="#202020" font-family="Liberation Sans">1</text><path d="M235 58L228 59L225 65L229 65L226 71L234 63L231 63Z" fill="#e4e4e4" stroke="#7a7a7a" stroke-width="0.9"/><circle cx="236" cy="69" r="3.6" fill="#fff" stroke="#6a6a6a" stroke-width="1"/><path d="M235.5 67V69.5H237.6" stroke="#222" stroke-width="0.9" fill="none"/><path d="M259 58L252 59L249 65L253 65L250 71L258 63L255 63Z" fill="#e4e4e4" stroke="#7a7a7a" stroke-width="0.9"/><rect x="259" y="58" width="5" height="5" fill="#f0f0f0" stroke="#888" stroke-width="0.8"/><path d="M254 69l3 3.5 7-7" fill="none" stroke="#6a6a6a" stroke-width="2"/><path d="M270.5 55v23" stroke="#888" stroke-dasharray="1 2"/><rect x="275" y="55" width="21" height="21" fill="#c4d0dc"/><rect x="278.5" y="60.0" width="5.5" height="4" rx="1" fill="#f0f0f0" stroke="#444" stroke-width="1.1"/><rect x="286" y="60.0" width="5.5" height="4" rx="1" fill="#f0f0f0" stroke="#444" stroke-width="1.1"/><path d="M284 61.0h2M291.5 60.5h1.5l1 2" stroke="#444" stroke-width="1.1" fill="none"/><path d="M285.5 66.5l7 3.5-7 3.5z" fill="#dfe6ee" stroke="#b8c4d0" stroke-width="0.8"/><rect x="302.5" y="60.0" width="5.5" height="4" rx="1" fill="#f0f0f0" stroke="#444" stroke-width="1.1"/><rect x="310" y="60.0" width="5.5" height="4" rx="1" fill="#f0f0f0" stroke="#444" stroke-width="1.1"/><path d="M308 61.0h2M315.5 60.5h1.5l1 2" stroke="#444" stroke-width="1.1" fill="none"/><text x="313" y="73" font-size="9" font-weight="700" fill="#202020" font-family="Liberation Sans">1</text></g></svg>
<div class="a" style="left:59px;top:80px;width:1015px;height:258px;background:#efefef;"></div>
<div class="a" style="left:59px;top:80px;width:1015px;height:1px;background:#a8a8a8;"></div>
<div class="a" style="left:59px;top:81px;width:1015px;height:17px;background:#e4e4e4;background:linear-gradient(#f6f6f6,#e6e6e6 55%,#d8d8d8 56%,#e4e4e4)"></div>
<div class="a" style="left:127px;top:81px;width:111px;height:17px;background:#e4e8ef;background:linear-gradient(#eef2f8,#e4e9f0 55%,#d6dce6 56%,#e2e6ee)"></div>
<div class="a" style="left:59px;top:98px;width:1015px;height:1px;background:#a0a0a0;"></div>
<div class="a" style="left:83px;top:81px;width:1px;height:17px;background:#a8a8a8;"></div>
<div class="a" style="left:127px;top:81px;width:1px;height:17px;background:#a8a8a8;"></div>
<div class="a" style="left:237px;top:81px;width:1px;height:17px;background:#a8a8a8;"></div>
<div class="a" style="left:359px;top:81px;width:1px;height:17px;background:#a8a8a8;"></div>
<div class="a" style="left:532px;top:81px;width:1px;height:17px;background:#a8a8a8;"></div>
<div class="a" style="left:641px;top:81px;width:1px;height:17px;background:#a8a8a8;"></div>
<div class="a" style="left:751px;top:81px;width:1px;height:17px;background:#a8a8a8;"></div>
<div class="a" style="left:813px;top:81px;width:1px;height:17px;background:#a8a8a8;"></div>
<div class="a" style="left:1053px;top:81px;width:1px;height:17px;background:#a8a8a8;"></div>
<div class="a" style="left:1056px;top:81px;width:1px;height:17px;background:#a8a8a8;"></div>
<div class="t" style="left:89px;top:82px;font-size:16px;color:#0a0a40;font-weight:700;font-family:'Liberation Serif',serif">i</div>
<div class="t" style="left:131px;top:85px;font-size:12px;color:#101030;font-weight:400;font-family:'Liberation Sans',sans-serif;letter-spacing:-0.004px;">Name</div>
<div class="t" style="left:242px;top:85px;font-size:12px;color:#101030;font-weight:400;font-family:'Liberation Sans',sans-serif;transform:scaleX(0.9539);transform-origin:0 0;">Address</div>
<div class="t" style="left:363px;top:85px;font-size:12px;color:#101030;font-weight:400;font-family:'Liberation Sans',sans-serif;letter-spacing:0.022px;">Display format</div>
<div class="t" style="left:535px;top:85px;font-size:12px;color:#101030;font-weight:400;font-family:'Liberation Sans',sans-serif;letter-spacing:0.073px;">Monitor value</div>
<div class="t" style="left:645px;top:85px;font-size:12px;color:#101030;font-weight:400;font-family:'Liberation Sans',sans-serif;letter-spacing:0.052px;">Modify value</div>
<div class="t" style="left:817px;top:85px;font-size:12px;color:#101030;font-weight:400;font-family:'Liberation Sans',sans-serif;letter-spacing:0.141px;">Comment</div>
<svg class="a" style="left:754px;top:82px" width="15" height="16"><path d="M13 0.8L6.5 1.5 2.5 8.5h4l-4 6.5 9-8.5h-4z" fill="#f4d010" stroke="#7a6000" stroke-width="0.8"/></svg>
<div class="a" style="left:59px;top:99px;width:1015px;height:1px;background:#ffffff;"></div>
<div class="a" style="left:59px;top:100px;width:24px;height:18px;background:#cbcbcb;"></div>
<div class="a" style="left:83px;top:100px;width:1px;height:18px;background:#b8b8b8;"></div>
<div class="a" style="left:84px;top:100px;width:43px;height:18px;background:#dedede;"></div>
<div class="a" style="left:127px;top:100px;width:1px;height:18px;background:#ffffff;"></div>
<div class="a" style="left:237px;top:100px;width:1px;height:18px;background:#ffffff;"></div>
<div class="a" style="left:359px;top:100px;width:1px;height:18px;background:#ffffff;"></div>
<div class="a" style="left:532px;top:100px;width:1px;height:18px;background:#ffffff;"></div>
<div class="a" style="left:641px;top:100px;width:1px;height:18px;background:#ffffff;"></div>
<div class="a" style="left:751px;top:100px;width:1px;height:18px;background:#ffffff;"></div>
<div class="a" style="left:813px;top:100px;width:1px;height:18px;background:#ffffff;"></div>
<div class="a" style="left:752px;top:100px;width:61px;height:18px;background:#dedede;"></div>
<div class="a" style="left:532px;top:100px;width:109px;height:18px;background:#fdc468;"></div>
<div class="t" style="left:64px;top:104px;font-size:12px;color:#8a8a8a;font-weight:400;font-family:'Liberation Sans',sans-serif;">1</div>
<div class="a" style="left:764px;top:102px;width:14px;height:14px;background:#f4f4f4;border:1px solid #b4b4b4;border-radius:2px;background:linear-gradient(#fafafa,#e4e4e4)"></div>
<div class="t" style="left:242px;top:104px;font-size:12px;color:#101010;font-weight:400;font-family:'Liberation Sans',sans-serif;transform:scaleX(0.9263);transform-origin:0 0;">%MW20</div>
<div class="t" style="left:363px;top:104px;font-size:12px;color:#101010;font-weight:400;font-family:'Liberation Sans',sans-serif;transform:scaleX(0.9075);transform-origin:0 0;">DEC</div>
<div class="t" style="left:536px;top:104px;font-size:12px;color:#101010;font-weight:400;font-family:'Liberation Sans',sans-serif;">0</div>
<div class="a" style="left:59px;top:118px;width:1015px;height:1px;background:#ffffff;"></div>
<div class="a" style="left:59px;top:119px;width:24px;height:18px;background:#cbcbcb;"></div>
<div class="a" style="left:83px;top:119px;width:1px;height:18px;background:#b8b8b8;"></div>
<div class="a" style="left:84px;top:119px;width:43px;height:18px;background:#dedede;"></div>
<div class="a" style="left:127px;top:119px;width:1px;height:18px;background:#ffffff;"></div>
<div class="a" style="left:237px;top:119px;width:1px;height:18px;background:#ffffff;"></div>
<div class="a" style="left:359px;top:119px;width:1px;height:18px;background:#ffffff;"></div>
<div class="a" style="left:532px;top:119px;width:1px;height:18px;background:#ffffff;"></div>
<div class="a" style="left:641px;top:119px;width:1px;height:18px;background:#ffffff;"></div>
<div class="a" style="left:751px;top:119px;width:1px;height:18px;background:#ffffff;"></div>
<div class="a" style="left:813px;top:119px;width:1px;height:18px;background:#ffffff;"></div>
<div class="a" style="left:752px;top:119px;width:61px;height:18px;background:#dedede;"></div>
<div class="a" style="left:532px;top:119px;width:109px;height:18px;background:#fdc468;"></div>
<div class="t" style="left:64px;top:123px;font-size:12px;color:#8a8a8a;font-weight:400;font-family:'Liberation Sans',sans-serif;">2</div>
<div class="a" style="left:764px;top:121px;width:14px;height:14px;background:#f4f4f4;border:1px solid #b4b4b4;border-radius:2px;background:linear-gradient(#fafafa,#e4e4e4)"></div>
<div class="t" style="left:242px;top:123px;font-size:12px;color:#101010;font-weight:400;font-family:'Liberation Sans',sans-serif;transform:scaleX(0.9263);transform-origin:0 0;">%MW22</div>
<div class="t" style="left:363px;top:123px;font-size:12px;color:#101010;font-weight:400;font-family:'Liberation Sans',sans-serif;transform:scaleX(0.9075);transform-origin:0 0;">DEC</div>
<div class="t" style="left:536px;top:123px;font-size:12px;color:#101010;font-weight:400;font-family:'Liberation Sans',sans-serif;">0</div>
<div class="a" style="left:59px;top:137px;width:1015px;height:1px;background:#ffffff;"></div>
<div class="a" style="left:59px;top:138px;width:24px;height:18px;background:#cbcbcb;"></div>
<div class="a" style="left:83px;top:138px;width:1px;height:18px;background:#b8b8b8;"></div>
<div class="a" style="left:84px;top:138px;width:43px;height:18px;background:#dedede;"></div>
<div class="a" style="left:127px;top:138px;width:1px;height:18px;background:#ffffff;"></div>
<div class="a" style="left:237px;top:138px;width:1px;height:18px;background:#ffffff;"></div>
<div class="a" style="left:359px;top:138px;width:1px;height:18px;background:#ffffff;"></div>
<div class="a" style="left:532px;top:138px;width:1px;height:18px;background:#ffffff;"></div>
<div class="a" style="left:641px;top:138px;width:1px;height:18px;background:#ffffff;"></div>
<div class="a" style="left:751px;top:138px;width:1px;height:18px;background:#ffffff;"></div>
<div class="a" style="left:813px;top:138px;width:1px;height:18px;background:#ffffff;"></div>
<div class="a" style="left:752px;top:138px;width:61px;height:18px;background:#dedede;"></div>
<div class="a" style="left:532px;top:138px;width:109px;height:18px;background:#fdc468;"></div>
<div class="t" style="left:64px;top:142px;font-size:12px;color:#8a8a8a;font-weight:400;font-family:'Liberation Sans',sans-serif;">3</div>
<div class="a" style="left:764px;top:140px;width:14px;height:14px;background:#f4f4f4;border:1px solid #b4b4b4;border-radius:2px;background:linear-gradient(#fafafa,#e4e4e4)"></div>
<div class="t" style="left:242px;top:142px;font-size:12px;color:#101010;font-weight:400;font-family:'Liberation Sans',sans-serif;transform:scaleX(0.9263);transform-origin:0 0;">%MW24</div>
<div class="t" style="left:363px;top:142px;font-size:12px;color:#101010;font-weight:400;font-family:'Liberation Sans',sans-serif;transform:scaleX(0.9075);transform-origin:0 0;">DEC</div>
<div class="t" style="left:536px;top:142px;font-size:12px;color:#101010;font-weight:400;font-family:'Liberation Sans',sans-serif;">0</div>
<div class="a" style="left:59px;top:156px;width:1015px;height:1px;background:#ffffff;"></div>
<div class="a" style="left:59px;top:157px;width:24px;height:18px;background:#cbcbcb;"></div>
<div class="a" style="left:83px;top:157px;width:1px;height:18px;background:#b8b8b8;"></div>
<div class="a" style="left:84px;top:157px;width:43px;height:18px;background:#dedede;"></div>
<div class="a" style="left:127px;top:157px;width:1px;height:18px;background:#ffffff;"></div>
<div class="a" style="left:237px;top:157px;width:1px;height:18px;background:#ffffff;"></div>
<div class="a" style="left:359px;top:157px;width:1px;height:18px;background:#ffffff;"></div>
<div class="a" style="left:532px;top:157px;width:1px;height:18px;background:#ffffff;"></div>
<div class="a" style="left:641px;top:157px;width:1px;height:18px;background:#ffffff;"></div>
<div class="a" style="left:751px;top:157px;width:1px;height:18px;background:#ffffff;"></div>
<div class="a" style="left:813px;top:157px;width:1px;height:18px;background:#ffffff;"></div>
<div class="a" style="left:752px;top:157px;width:61px;height:18px;background:#dedede;"></div>
<div class="a" style="left:532px;top:157px;width:109px;height:18px;background:#fdc468;"></div>
<div class="t" style="left:64px;top:161px;font-size:12px;color:#8a8a8a;font-weight:400;font-family:'Liberation Sans',sans-serif;">4</div>
<div class="a" style="left:764px;top:159px;width:14px;height:14px;background:#f4f4f4;border:1px solid #b4b4b4;border-radius:2px;background:linear-gradient(#fafafa,#e4e4e4)"></div>
<div class="t" style="left:242px;top:161px;font-size:12px;color:#101010;font-weight:400;font-family:'Liberation Sans',sans-serif;transform:scaleX(0.9263);transform-origin:0 0;">%MW26</div>
<div class="t" style="left:363px;top:161px;font-size:12px;color:#101010;font-weight:400;font-family:'Liberation Sans',sans-serif;transform:scaleX(0.9075);transform-origin:0 0;">DEC</div>
<div class="t" style="left:536px;top:161px;font-size:12px;color:#101010;font-weight:400;font-family:'Liberation Sans',sans-serif;">0</div>
<div class="a" style="left:59px;top:175px;width:1015px;height:1px;background:#ffffff;"></div>
<div class="a" style="left:59px;top:176px;width:24px;height:18px;background:#cbcbcb;"></div>
<div class="a" style="left:83px;top:176px;width:1px;height:18px;background:#b8b8b8;"></div>
<div class="a" style="left:84px;top:176px;width:43px;height:18px;background:#dedede;"></div>
<div class="a" style="left:127px;top:176px;width:1px;height:18px;background:#ffffff;"></div>
<div class="a" style="left:237px;top:176px;width:1px;height:18px;background:#ffffff;"></div>
<div class="a" style="left:359px;top:176px;width:1px;height:18px;background:#ffffff;"></div>
<div class="a" style="left:532px;top:176px;width:1px;height:18px;background:#ffffff;"></div>
<div class="a" style="left:641px;top:176px;width:1px;height:18px;background:#ffffff;"></div>
<div class="a" style="left:751px;top:176px;width:1px;height:18px;background:#ffffff;"></div>
<div class="a" style="left:813px;top:176px;width:1px;height:18px;background:#ffffff;"></div>
<div class="a" style="left:752px;top:176px;width:61px;height:18px;background:#dedede;"></div>
<div class="a" style="left:532px;top:176px;width:109px;height:18px;background:#fdc468;"></div>
<div class="t" style="left:64px;top:180px;font-size:12px;color:#8a8a8a;font-weight:400;font-family:'Liberation Sans',sans-serif;">5</div>
<div class="a" style="left:764px;top:178px;width:14px;height:14px;background:#f4f4f4;border:1px solid #b4b4b4;border-radius:2px;background:linear-gradient(#fafafa,#e4e4e4)"></div>
<div class="t" style="left:242px;top:180px;font-size:12px;color:#101010;font-weight:400;font-family:'Liberation Sans',sans-serif;transform:scaleX(0.9263);transform-origin:0 0;">%MW28</div>
<div class="t" style="left:363px;top:180px;font-size:12px;color:#101010;font-weight:400;font-family:'Liberation Sans',sans-serif;transform:scaleX(0.9075);transform-origin:0 0;">DEC</div>
<div class="t" style="left:536px;top:180px;font-size:12px;color:#101010;font-weight:400;font-family:'Liberation Sans',sans-serif;">0</div>
<div class="a" style="left:59px;top:194px;width:1015px;height:1px;background:#ffffff;"></div>
<div class="a" style="left:59px;top:195px;width:24px;height:18px;background:#cbcbcb;"></div>
<div class="a" style="left:83px;top:195px;width:1px;height:18px;background:#b8b8b8;"></div>
<div class="a" style="left:84px;top:195px;width:43px;height:18px;background:#dedede;"></div>
<div class="a" style="left:127px;top:195px;width:1px;height:18px;background:#ffffff;"></div>
<div class="a" style="left:237px;top:195px;width:1px;height:18px;background:#ffffff;"></div>
<div class="a" style="left:359px;top:195px;width:1px;height:18px;background:#ffffff;"></div>
<div class="a" style="left:532px;top:195px;width:1px;height:18px;background:#ffffff;"></div>
<div class="a" style="left:641px;top:195px;width:1px;height:18px;background:#ffffff;"></div>
<div class="a" style="left:751px;top:195px;width:1px;height:18px;background:#ffffff;"></div>
<div class="a" style="left:813px;top:195px;width:1px;height:18px;background:#ffffff;"></div>
<div class="a" style="left:752px;top:195px;width:61px;height:18px;background:#dedede;"></div>
<div class="a" style="left:532px;top:195px;width:109px;height:18px;background:#fdc468;"></div>
<div class="t" style="left:64px;top:199px;font-size:12px;color:#8a8a8a;font-weight:400;font-family:'Liberation Sans',sans-serif;">6</div>
<div class="a" style="left:764px;top:197px;width:14px;height:14px;background:#f4f4f4;border:1px solid #b4b4b4;border-radius:2px;background:linear-gradient(#fafafa,#e4e4e4)"></div>
<div class="t" style="left:242px;top:199px;font-size:12px;color:#101010;font-weight:400;font-family:'Liberation Sans',sans-serif;transform:scaleX(0.9263);transform-origin:0 0;">%MW30</div>
<div class="t" style="left:363px;top:199px;font-size:12px;color:#101010;font-weight:400;font-family:'Liberation Sans',sans-serif;transform:scaleX(0.9075);transform-origin:0 0;">DEC</div>
<div class="t" style="left:536px;top:199px;font-size:12px;color:#101010;font-weight:400;font-family:'Liberation Sans',sans-serif;">0</div>
<div class="a" style="left:59px;top:213px;width:1015px;height:1px;background:#ffffff;"></div>
<div class="a" style="left:59px;top:214px;width:24px;height:18px;background:#cbcbcb;"></div>
<div class="a" style="left:83px;top:214px;width:1px;height:18px;background:#b8b8b8;"></div>
<div class="a" style="left:84px;top:214px;width:43px;height:18px;background:#dedede;"></div>
<div class="a" style="left:127px;top:214px;width:1px;height:18px;background:#ffffff;"></div>
<div class="a" style="left:237px;top:214px;width:1px;height:18px;background:#ffffff;"></div>
<div class="a" style="left:359px;top:214px;width:1px;height:18px;background:#ffffff;"></div>
<div class="a" style="left:532px;top:214px;width:1px;height:18px;background:#ffffff;"></div>
<div class="a" style="left:641px;top:214px;width:1px;height:18px;background:#ffffff;"></div>
<div class="a" style="left:751px;top:214px;width:1px;height:18px;background:#ffffff;"></div>
<div class="a" style="left:813px;top:214px;width:1px;height:18px;background:#ffffff;"></div>
<div class="a" style="left:752px;top:214px;width:61px;height:18px;background:#dedede;"></div>
<div class="a" style="left:532px;top:214px;width:109px;height:18px;background:#fdc468;"></div>
<div class="t" style="left:64px;top:218px;font-size:12px;color:#8a8a8a;font-weight:400;font-family:'Liberation Sans',sans-serif;">7</div>
<div class="a" style="left:764px;top:216px;width:14px;height:14px;background:#f4f4f4;border:1px solid #b4b4b4;border-radius:2px;background:linear-gradient(#fafafa,#e4e4e4)"></div>
<div class="t" style="left:242px;top:218px;font-size:12px;color:#101010;font-weight:400;font-family:'Liberation Sans',sans-serif;transform:scaleX(0.9263);transform-origin:0 0;">%MW32</div>
<div class="t" style="left:363px;top:218px;font-size:12px;color:#101010;font-weight:400;font-family:'Liberation Sans',sans-serif;transform:scaleX(0.9075);transform-origin:0 0;">DEC</div>
<div class="t" style="left:536px;top:218px;font-size:12px;color:#101010;font-weight:400;font-family:'Liberation Sans',sans-serif;">0</div>
<div class="a" style="left:59px;top:232px;width:1015px;height:1px;background:#ffffff;"></div>
<div class="a" style="left:59px;top:233px;width:24px;height:18px;background:#cbcbcb;"></div>
<div class="a" style="left:83px;top:233px;width:1px;height:18px;background:#b8b8b8;"></div>
<div class="a" style="left:84px;top:233px;width:43px;height:18px;background:#dedede;"></div>
<div class="a" style="left:127px;top:233px;width:1px;height:18px;background:#ffffff;"></div>
<div class="a" style="left:237px;top:233px;width:1px;height:18px;background:#ffffff;"></div>
<div class="a" style="left:359px;top:233px;width:1px;height:18px;background:#ffffff;"></div>
<div class="a" style="left:532px;top:233px;width:1px;height:18px;background:#ffffff;"></div>
<div class="a" style="left:641px;top:233px;width:1px;height:18px;background:#ffffff;"></div>
<div class="a" style="left:751px;top:233px;width:1px;height:18px;background:#ffffff;"></div>
<div class="a" style="left:813px;top:233px;width:1px;height:18px;background:#ffffff;"></div>
<div class="a" style="left:752px;top:233px;width:61px;height:18px;background:#dedede;"></div>
<div class="a" style="left:532px;top:233px;width:109px;height:18px;background:#fdc468;"></div>
<div class="t" style="left:64px;top:237px;font-size:12px;color:#8a8a8a;font-weight:400;font-family:'Liberation Sans',sans-serif;">8</div>
<div class="a" style="left:764px;top:235px;width:14px;height:14px;background:#f4f4f4;border:1px solid #b4b4b4;border-radius:2px;background:linear-gradient(#fafafa,#e4e4e4)"></div>
<div class="t" style="left:242px;top:237px;font-size:12px;color:#101010;font-weight:400;font-family:'Liberation Sans',sans-serif;transform:scaleX(0.9263);transform-origin:0 0;">%MW34</div>
<div class="t" style="left:363px;top:237px;font-size:12px;color:#101010;font-weight:400;font-family:'Liberation Sans',sans-serif;transform:scaleX(0.9075);transform-origin:0 0;">DEC</div>
<div class="t" style="left:536px;top:237px;font-size:12px;color:#101010;font-weight:400;font-family:'Liberation Sans',sans-serif;">0</div>
<div class="a" style="left:59px;top:251px;width:1015px;height:1px;background:#ffffff;"></div>
<div class="a" style="left:59px;top:252px;width:24px;height:18px;background:#cbcbcb;"></div>
<div class="a" style="left:83px;top:252px;width:1px;height:18px;background:#b8b8b8;"></div>
<div class="a" style="left:84px;top:252px;width:43px;height:18px;background:#dedede;"></div>
<div class="a" style="left:127px;top:252px;width:1px;height:18px;background:#ffffff;"></div>
<div class="a" style="left:237px;top:252px;width:1px;height:18px;background:#ffffff;"></div>
<div class="a" style="left:359px;top:252px;width:1px;height:18px;background:#ffffff;"></div>
<div class="a" style="left:532px;top:252px;width:1px;height:18px;background:#ffffff;"></div>
<div class="a" style="left:641px;top:252px;width:1px;height:18px;background:#ffffff;"></div>
<div class="a" style="left:751px;top:252px;width:1px;height:18px;background:#ffffff;"></div>
<div class="a" style="left:813px;top:252px;width:1px;height:18px;background:#ffffff;"></div>
<div class="a" style="left:752px;top:252px;width:61px;height:18px;background:#dedede;"></div>
<div class="a" style="left:532px;top:252px;width:109px;height:18px;background:#fdc468;"></div>
<div class="t" style="left:64px;top:256px;font-size:12px;color:#8a8a8a;font-weight:400;font-family:'Liberation Sans',sans-serif;">9</div>
<div class="a" style="left:764px;top:254px;width:14px;height:14px;background:#f4f4f4;border:1px solid #b4b4b4;border-radius:2px;background:linear-gradient(#fafafa,#e4e4e4)"></div>
<div class="t" style="left:242px;top:256px;font-size:12px;color:#101010;font-weight:400;font-family:'Liberation Sans',sans-serif;transform:scaleX(0.9263);transform-origin:0 0;">%MW36</div>
<div class="t" style="left:363px;top:256px;font-size:12px;color:#101010;font-weight:400;font-family:'Liberation Sans',sans-serif;transform:scaleX(0.9075);transform-origin:0 0;">DEC</div>
<div class="t" style="left:536px;top:256px;font-size:12px;color:#101010;font-weight:400;font-family:'Liberation Sans',sans-serif;">0</div>
<div class="a" style="left:59px;top:270px;width:1015px;height:1px;background:#ffffff;"></div>
<div class="a" style="left:59px;top:271px;width:24px;height:18px;background:#cbcbcb;"></div>
<div class="a" style="left:83px;top:271px;width:1px;height:18px;background:#b8b8b8;"></div>
<div class="a" style="left:84px;top:271px;width:43px;height:18px;background:#dedede;"></div>
<div class="a" style="left:127px;top:271px;width:1px;height:18px;background:#ffffff;"></div>
<div class="a" style="left:237px;top:271px;width:1px;height:18px;background:#ffffff;"></div>
<div class="a" style="left:359px;top:271px;width:1px;height:18px;background:#ffffff;"></div>
<div class="a" style="left:532px;top:271px;width:1px;height:18px;background:#ffffff;"></div>
<div class="a" style="left:641px;top:271px;width:1px;height:18px;background:#ffffff;"></div>
<div class="a" style="left:751px;top:271px;width:1px;height:18px;background:#ffffff;"></div>
<div class="a" style="left:813px;top:271px;width:1px;height:18px;background:#ffffff;"></div>
<div class="a" style="left:752px;top:271px;width:61px;height:18px;background:#dedede;"></div>
<div class="a" style="left:532px;top:271px;width:109px;height:18px;background:#fdc468;"></div>
<div class="t" style="left:62px;top:275px;font-size:12px;color:#8a8a8a;font-weight:400;font-family:'Liberation Sans',sans-serif;">10</div>
<div class="a" style="left:764px;top:273px;width:14px;height:14px;background:#f4f4f4;border:1px solid #b4b4b4;border-radius:2px;background:linear-gradient(#fafafa,#e4e4e4)"></div>
<div class="t" style="left:242px;top:275px;font-size:12px;color:#101010;font-weight:400;font-family:'Liberation Sans',sans-serif;transform:scaleX(0.9263);transform-origin:0 0;">%MW38</div>
<div class="t" style="left:363px;top:275px;font-size:12px;color:#101010;font-weight:400;font-family:'Liberation Sans',sans-serif;transform:scaleX(0.9075);transform-origin:0 0;">DEC</div>
<div class="t" style="left:536px;top:275px;font-size:12px;color:#101010;font-weight:400;font-family:'Liberation Sans',sans-serif;">0</div>
<div class="a" style="left:59px;top:289px;width:1015px;height:1px;background:#ffffff;"></div>
<div class="a" style="left:59px;top:290px;width:24px;height:18px;background:#c9d4e0;"></div>
<div class="a" style="left:83px;top:290px;width:1px;height:18px;background:#b8b8b8;"></div>
<div class="a" style="left:84px;top:290px;width:43px;height:18px;background:#dedede;"></div>
<div class="a" style="left:127px;top:290px;width:1px;height:18px;background:#ffffff;"></div>
<div class="a" style="left:237px;top:290px;width:1px;height:18px;background:#ffffff;"></div>
<div class="a" style="left:359px;top:290px;width:1px;height:18px;background:#ffffff;"></div>
<div class="a" style="left:532px;top:290px;width:1px;height:18px;background:#ffffff;"></div>
<div class="a" style="left:641px;top:290px;width:1px;height:18px;background:#ffffff;"></div>
<div class="a" style="left:751px;top:290px;width:1px;height:18px;background:#ffffff;"></div>
<div class="a" style="left:813px;top:290px;width:1px;height:18px;background:#ffffff;"></div>
<div class="a" style="left:752px;top:290px;width:61px;height:18px;background:#dedede;"></div>
<div class="a" style="left:532px;top:290px;width:109px;height:18px;background:#fdc468;"></div>
<div class="t" style="left:62px;top:294px;font-size:12px;color:#8a8a8a;font-weight:400;font-family:'Liberation Sans',sans-serif;">11</div>
<div class="t" style="left:242px;top:294px;font-size:12px;color:#101010;font-weight:400;font-family:'Liberation Sans',sans-serif;transform:scaleX(0.9235);transform-origin:0 0;">%M1.2</div>
<div class="t" style="left:363px;top:294px;font-size:12px;color:#101010;font-weight:400;font-family:'Liberation Sans',sans-serif;letter-spacing:-0.008px;">Bool</div>
<div class="t" style="left:552px;top:294px;font-size:12px;color:#101010;font-weight:400;font-family:'Liberation Sans',sans-serif;transform:scaleX(0.7958);transform-origin:0 0;">TRUE</div>
<div class="a" style="left:59px;top:308px;width:1015px;height:1px;background:#ffffff;"></div>
<div class="a" style="left:59px;top:309px;width:24px;height:18px;background:#cbcbcb;"></div>
<div class="a" style="left:83px;top:309px;width:1px;height:18px;background:#b8b8b8;"></div>
<div class="a" style="left:84px;top:309px;width:43px;height:18px;background:#dedede;"></div>
<div class="a" style="left:127px;top:309px;width:1px;height:18px;background:#ffffff;"></div>
<div class="a" style="left:237px;top:309px;width:1px;height:18px;background:#ffffff;"></div>
<div class="a" style="left:359px;top:309px;width:1px;height:18px;background:#ffffff;"></div>
<div class="a" style="left:532px;top:309px;width:1px;height:18px;background:#ffffff;"></div>
<div class="a" style="left:641px;top:309px;width:1px;height:18px;background:#ffffff;"></div>
<div class="a" style="left:751px;top:309px;width:1px;height:18px;background:#ffffff;"></div>
<div class="a" style="left:813px;top:309px;width:1px;height:18px;background:#ffffff;"></div>
<div class="a" style="left:752px;top:309px;width:61px;height:18px;background:#dedede;"></div>
<div class="a" style="left:532px;top:309px;width:109px;height:18px;background:#fdc468;"></div>
<div class="t" style="left:62px;top:313px;font-size:12px;color:#8a8a8a;font-weight:400;font-family:'Liberation Sans',sans-serif;">12</div>
<div class="a" style="left:764px;top:311px;width:14px;height:14px;background:#f4f4f4;border:1px solid #b4b4b4;border-radius:2px;background:linear-gradient(#fafafa,#e4e4e4)"></div>
<div class="t" style="left:242px;top:313px;font-size:12px;color:#101010;font-weight:400;font-family:'Liberation Sans',sans-serif;transform:scaleX(0.8792);transform-origin:0 0;">%MW6</div>
<div class="t" style="left:363px;top:313px;font-size:12px;color:#101010;font-weight:400;font-family:'Liberation Sans',sans-serif;letter-spacing:-0.115px;">Hex</div>
<div class="t" style="left:536px;top:313px;font-size:12px;color:#101010;font-weight:400;font-family:'Liberation Sans',sans-serif;letter-spacing:0.469px;">16#7002</div>
<div class="a" style="left:59px;top:327px;width:1015px;height:1px;background:#ffffff;"></div>
<div class="a" style="left:59px;top:328px;width:24px;height:18px;background:#cbcbcb;"></div>
<div class="a" style="left:83px;top:328px;width:1px;height:18px;background:#b8b8b8;"></div>
<div class="a" style="left:84px;top:328px;width:43px;height:18px;background:#dedede;"></div>
<div class="a" style="left:127px;top:328px;width:1px;height:18px;background:#ffffff;"></div>
<div class="a" style="left:237px;top:328px;width:1px;height:18px;background:#ffffff;"></div>
<div class="a" style="left:359px;top:328px;width:1px;height:18px;background:#ffffff;"></div>
<div class="a" style="left:532px;top:328px;width:1px;height:18px;background:#ffffff;"></div>
<div class="a" style="left:641px;top:328px;width:1px;height:18px;background:#ffffff;"></div>
<div class="a" style="left:751px;top:328px;width:1px;height:18px;background:#ffffff;"></div>
<div class="a" style="left:813px;top:328px;width:1px;height:18px;background:#ffffff;"></div>
<div class="a" style="left:752px;top:328px;width:61px;height:18px;background:#dedede;"></div>
<div class="t" style="left:62px;top:332px;font-size:12px;color:#8a8a8a;font-weight:400;font-family:'Liberation Sans',sans-serif;">13</div>
<div class="a" style="left:764px;top:330px;width:14px;height:14px;background:#f4f4f4;border:1px solid #b4b4b4;border-radius:2px;background:linear-gradient(#fafafa,#e4e4e4)"></div>
<div class="a" style="left:532px;top:328px;width:109px;height:9px;background:#dedede;"></div>
<div class="a" style="left:359px;top:328px;width:173px;height:9px;background:#dedede;"></div>
<div class="t" style="left:242px;top:333px;font-size:12px;color:#a8a8a8;font-weight:400;font-family:'Liberation Sans',sans-serif;">&lt;Add new&gt;</div>
<div class="a" style="left:128px;top:290px;width:109px;height:18px;background:#ffffff;border:1px solid #c0c8d8"></div>
<div class="t" style="left:131px;top:294px;font-size:12px;color:#101010;font-weight:400;font-family:'Liberation Sans',sans-serif;">&quot;Request&quot;</div>
<div class="a" style="left:221px;top:291px;width:15px;height:15px;background:#e6e6f0;border:1px solid #707088"></div>
<svg class="a" style="left:224px;top:294px" width="10" height="10"><path d="M1 1.5h1M1 4.5h1M1 7.5h1M3 1.5h6M3 4.5h6M3 7.5h6" stroke="#2030a0" stroke-width="1"/></svg>
<div class="t" style="left:131px;top:313px;font-size:12px;color:#101010;font-weight:400;font-family:'Liberation Sans',sans-serif;transform:scaleX(0.9061);transform-origin:0 0;">&quot;STATUS&quot;</div>
<div class="a" style="left:513px;top:290px;width:17px;height:17px;background:#e8e8e8;border:1px solid #8a8a8a;background:linear-gradient(#f8f8f8,#dcdcdc)"></div>
<svg class="a" style="left:517px;top:296px" width="9" height="5"><path d="M0 0h8L4 4z" fill="#1020a0"/></svg>
<div class="a" style="left:535px;top:293px;width:12px;height:12px;background:#1ca040;border:1px solid #202850;box-shadow:inset 0 0 0 1px #e8f0e8;background:linear-gradient(#30b050,#109030)"></div>
<div class="t" style="left:646px;top:294px;font-size:12px;color:#101010;font-weight:400;font-family:'Liberation Sans',sans-serif;transform:scaleX(0.7652);transform-origin:0 0;">TRUE</div>
<div class="a" style="left:763px;top:291px;width:15px;height:15px;background:#3c8ee0;border:1px solid #405070;border-radius:2px;background:linear-gradient(#7cc0f8,#2a78d0)"></div>
<svg class="a" style="left:765px;top:293px" width="11" height="11"><path d="M1.5 5.5l3 3 5-7" stroke="#102040" stroke-width="1.8" fill="none"/></svg>
<svg class="a" style="left:788px;top:290px" width="18" height="17"><path d="M9 1L17 16H1z" fill="#f8e800" stroke="#c0b000"/><path d="M9 5v6" stroke="#000" stroke-width="2.4"/><rect x="7.8" y="12.5" width="2.4" height="2.4" fill="#000"/></svg>
<div class="a" style="left:1054px;top:99px;width:2px;height:238px;background:#ececec;"></div>
<div class="a" style="left:1056px;top:99px;width:18px;height:238px;background:#e8e8e8;"></div>
<div class="a" style="left:1056px;top:100px;width:18px;height:18px;background:#dcdcdc;border:1px solid #8a8a8a;box-shadow:inset 0 0 0 1px #fff;background:linear-gradient(#ececec,#d0d0d0)"></div>
<svg class="a" style="left:1059px;top:105px" width="12" height="8"><path d="M1 6.5l5-5 5 5" stroke="#404040" stroke-width="2.2" fill="none"/></svg>
<div class="a" style="left:59px;top:337px;width:25px;height:1px;background:#ffffff;"></div>
<div class="a" style="left:59px;top:338px;width:25px;height:17px;background:#cbcbcb;"></div>
<div class="a" style="left:84px;top:337px;width:19px;height:18px;background:#dcdcdc;border:1px solid #8a8a8a;box-shadow:inset 0 0 0 1px #fff;background:linear-gradient(#ececec,#d2d2d2)"></div>
<svg class="a" style="left:89px;top:341px" width="8" height="11"><path d="M6.5 1.5L2 5.5l4.5 4" stroke="#404040" stroke-width="2" fill="none"/></svg>
<div class="a" style="left:103px;top:337px;width:971px;height:18px;background:#e0e0e0;border:1px solid #8a8a8a;border-right:none;box-shadow:inset 0 0 0 1px #fff;background:linear-gradient(#efefef,#d4d4d4)"></div>
<svg class="a" style="left:541px;top:342px" width="9" height="9"><path d="M0.5 0v9M2.5 0v9M4.5 0v9M6.5 0v9" stroke="#505050" stroke-width="1"/></svg>
<div class="a" style="left:941px;top:119px;width:669px;height:626px;background:#0c0c0c;box-shadow:0 18px 44px 0px rgba(0,0,0,0.75)"></div>
<div class="a" style="left:941px;top:119px;width:669px;height:626px;background:#0c0c0c;"></div>
<div class="a" style="left:941px;top:119px;width:669px;height:40px;background:#2e2e2e;"></div>
<div class="a" style="left:950px;top:128px;width:240px;height:32px;background:#0c0c0c;border-radius:8px 8px 0 0"></div>
<div class="a" style="left:941px;top:150px;width:9px;height:9px;background:#0c0c0c;"></div>
<div class="a" style="left:941px;top:150px;width:9px;height:9px;background:#2e2e2e;border-bottom-right-radius:8px"></div>
<svg class="a" style="left:958px;top:137px" width="18" height="14"><rect x="0.5" y="0.5" width="16" height="12.5" fill="#000" stroke="#b4bcc8"/><rect x="1" y="1" width="15" height="2" fill="#d8dce6"/><rect x="10" y="1.5" width="1" height="1" fill="#4a6aa0"/><rect x="12" y="1.5" width="1" height="1" fill="#4a6aa0"/><rect x="14" y="1.5" width="1" height="1" fill="#4a6aa0"/><path d="M5.5 5.5H3.5L2.5 6.5V8.5L3.5 9.5H5.5" stroke="#fff" stroke-width="1" fill="none"/><rect x="6.5" y="6" width="1" height="1" fill="#fff"/><rect x="6.5" y="8.5" width="1" height="1" fill="#fff"/><path d="M8.5 5v2.5h1V10" stroke="#fff" stroke-width="1" fill="none"/><rect x="11" y="9" width="3" height="1" fill="#fff"/></svg>
<div class="t" style="left:985px;top:138px;font-size:12px;color:#ffffff;font-weight:700;font-family:'Liberation Sans',sans-serif;letter-spacing:-0.144px;">Command Prompt</div>
<svg class="a" style="left:1163px;top:137px" width="11" height="11"><path d="M0.8 0.8L10.2 10.2M10.2 0.8L0.8 10.2" stroke="#e8e8e8" stroke-width="1.1"/></svg>
<svg class="a" style="left:1205px;top:137px" width="12" height="12"><path d="M5.5 0V11M0 5.5H11" stroke="#e8e8e8" stroke-width="1.1"/></svg>
<div class="a" style="left:1190px;top:150px;width:9px;height:9px;background:#0c0c0c;"></div>
<div class="a" style="left:1190px;top:150px;width:9px;height:9px;background:#2e2e2e;border-bottom-left-radius:8px"></div>
<div class="a" style="left:1226px;top:131px;width:1px;height:24px;background:#444444;"></div>
<svg class="a" style="left:1235px;top:139px" width="10" height="7"><path d="M1 1L5 5L9 1" stroke="#e0e0e0" stroke-width="1.3" fill="none"/></svg>
<div class="t" style="left:949px;top:171px;font-size:15px;color:#cccccc;font-weight:400;font-family:'Liberation Mono',monospace;letter-spacing:0px;-webkit-text-stroke:0.15px #cccccc">Microsoft Windows [Version 10.0.22621.2283]</div>
<div class="t" style="left:949px;top:190px;font-size:15px;color:#cccccc;font-weight:400;font-family:'Liberation Mono',monospace;letter-spacing:0px;-webkit-text-stroke:0.15px #cccccc">(c) Microsoft Corporation. All rights reserved.</div>
<div class="t" style="left:949px;top:228px;font-size:15px;color:#cccccc;font-weight:400;font-family:'Liberation Mono',monospace;letter-spacing:0px;-webkit-text-stroke:0.15px #cccccc">C:\Users\Siemens&gt;ping 192.168.10.22</div>
<div class="t" style="left:949px;top:266px;font-size:15px;color:#cccccc;font-weight:400;font-family:'Liberation Mono',monospace;letter-spacing:0px;-webkit-text-stroke:0.15px #cccccc">Pinging 192.168.10.22 with 32 bytes of data:</div>
<div class="t" style="left:949px;top:285px;font-size:15px;color:#cccccc;font-weight:400;font-family:'Liberation Mono',monospace;letter-spacing:0px;-webkit-text-stroke:0.15px #cccccc">Reply from 192.168.10.22: bytes=32 time=228ms TTL=64</div>
<div class="t" style="left:949px;top:304px;font-size:15px;color:#cccccc;font-weight:400;font-family:'Liberation Mono',monospace;letter-spacing:0px;-webkit-text-stroke:0.15px #cccccc">Reply from 192.168.10.22: bytes=32 time=1ms TTL=64</div>
<div class="t" style="left:949px;top:323px;font-size:15px;color:#cccccc;font-weight:400;font-family:'Liberation Mono',monospace;letter-spacing:0px;-webkit-text-stroke:0.15px #cccccc">Reply from 192.168.10.22: bytes=32 time=2ms TTL=64</div>
<div class="t" style="left:949px;top:342px;font-size:15px;color:#cccccc;font-weight:400;font-family:'Liberation Mono',monospace;letter-spacing:0px;-webkit-text-stroke:0.15px #cccccc">Reply from 192.168.10.22: bytes=32 time=2ms TTL=64</div>
<div class="t" style="left:949px;top:380px;font-size:15px;color:#cccccc;font-weight:400;font-family:'Liberation Mono',monospace;letter-spacing:0px;-webkit-text-stroke:0.15px #cccccc">Ping statistics for 192.168.10.22:</div>
<div class="t" style="left:949px;top:399px;font-size:15px;color:#cccccc;font-weight:400;font-family:'Liberation Mono',monospace;letter-spacing:0px;-webkit-text-stroke:0.15px #cccccc">    Packets: Sent = 4, Received = 4, Lost = 0 (0% loss),</div>
<div class="t" style="left:949px;top:418px;font-size:15px;color:#cccccc;font-weight:400;font-family:'Liberation Mono',monospace;letter-spacing:0px;-webkit-text-stroke:0.15px #cccccc">Approximate round trip times in milli-seconds:</div>
<div class="t" style="left:949px;top:437px;font-size:15px;color:#cccccc;font-weight:400;font-family:'Liberation Mono',monospace;letter-spacing:0px;-webkit-text-stroke:0.15px #cccccc">    Minimum = 1ms, Maximum = 228ms, Average = 58ms</div>
<div class="t" style="left:949px;top:475px;font-size:15px;color:#cccccc;font-weight:400;font-family:'Liberation Mono',monospace;letter-spacing:0px;-webkit-text-stroke:0.15px #cccccc">C:\Users\Siemens&gt;ping 192.168.10.22</div>
<div class="t" style="left:949px;top:513px;font-size:15px;color:#cccccc;font-weight:400;font-family:'Liberation Mono',monospace;letter-spacing:0px;-webkit-text-stroke:0.15px #cccccc">Pinging 192.168.10.22 with 32 bytes of data:</div>
<div class="t" style="left:949px;top:532px;font-size:15px;color:#cccccc;font-weight:400;font-family:'Liberation Mono',monospace;letter-spacing:0px;-webkit-text-stroke:0.15px #cccccc">Request timed out.</div>
<div class="t" style="left:949px;top:551px;font-size:15px;color:#cccccc;font-weight:400;font-family:'Liberation Mono',monospace;letter-spacing:0px;-webkit-text-stroke:0.15px #cccccc">Request timed out.</div>
<div class="t" style="left:949px;top:570px;font-size:15px;color:#cccccc;font-weight:400;font-family:'Liberation Mono',monospace;letter-spacing:0px;-webkit-text-stroke:0.15px #cccccc">Reply from 192.168.10.200: Destination host unreachable.</div>
<div class="t" style="left:949px;top:589px;font-size:15px;color:#cccccc;font-weight:400;font-family:'Liberation Mono',monospace;letter-spacing:0px;-webkit-text-stroke:0.15px #cccccc">Reply from 192.168.10.200: Destination host unreachable.</div>
<div class="t" style="left:949px;top:627px;font-size:15px;color:#cccccc;font-weight:400;font-family:'Liberation Mono',monospace;letter-spacing:0px;-webkit-text-stroke:0.15px #cccccc">Ping statistics for 192.168.10.22:</div>
<div class="t" style="left:949px;top:646px;font-size:15px;color:#cccccc;font-weight:400;font-family:'Liberation Mono',monospace;letter-spacing:0px;-webkit-text-stroke:0.15px #cccccc">    Packets: Sent = 4, Received = 2, Lost = 2 (50% loss),</div>
<div class="t" style="left:949px;top:684px;font-size:15px;color:#cccccc;font-weight:400;font-family:'Liberation Mono',monospace;letter-spacing:0px;-webkit-text-stroke:0.15px #cccccc">C:\Users\Siemens&gt;</div>
<div class="a" style="left:1102px;top:682px;width:1px;height:15px;background:#ffffff;"></div>
</body></html>
